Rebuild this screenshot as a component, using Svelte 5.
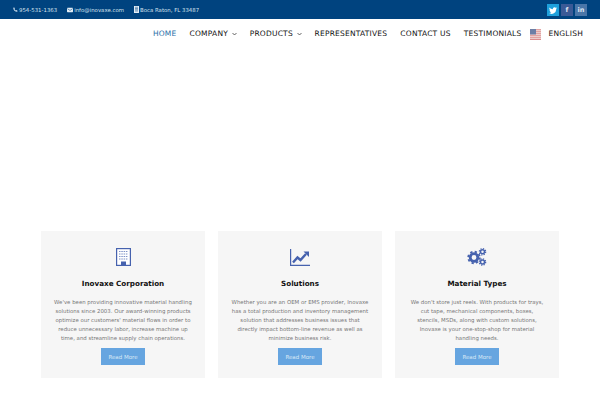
<script>
	const contacts = [
		{ icon: 'phone', text: '954-531-1363' },
		{ icon: 'mail', text: 'info@inovaxe.com' },
		{ icon: 'building', text: 'Boca Raton, FL 33487' }
	];

	const menu = [
		{ label: 'HOME', active: true },
		{ label: 'COMPANY', caret: true },
		{ label: 'PRODUCTS', caret: true },
		{ label: 'REPRESENTATIVES' },
		{ label: 'CONTACT US' },
		{ label: 'TESTIMONIALS' }
	];

	const cards = [
		{
			icon: 'office',
			title: 'Inovaxe Corporation',
			lines: [
				"We've been providing innovative material handling",
				'solutions since 2003. Our award-winning products',
				"optimize our customers' material flows in order to",
				'reduce unnecessary labor, increase machine up',
				'time, and streamline supply chain operations.'
			]
		},
		{
			icon: 'chart',
			title: 'Solutions',
			lines: [
				'Whether you are an OEM or EMS provider, Inovaxe',
				'has a total production and inventory management',
				'solution that addresses business issues that',
				'directly impact bottom-line revenue as well as',
				'minimize business risk.'
			]
		},
		{
			icon: 'gears',
			title: 'Material Types',
			lines: [
				"We don't store just reels. With products for trays,",
				'cut tape, mechanical components, boxes,',
				'stencils, MSDs, along with custom solutions,',
				'Inovaxe is your one-stop-shop for material',
				'handling needs.'
			]
		}
	];

	// teeth of a gear, as dashes round a circle
	function teeth(r) {
		const c = 2 * Math.PI * r;
		return `${c / 16} ${c / 16}`;
	}
</script>

<div class="topbar">
	<div class="contacts">
		{#each contacts as c}
			<span class="contact">
				{#if c.icon === 'phone'}
					<svg width="5" height="5" viewBox="0 0 12 12"><path d="M2.5 .8 4.6 3.6 3.4 5c.8 1.600 2 2.800 3.600 3.600L8.400 7.400 11.200 9.500 9.800 11.400C5 11.200 .8 7 .6 2.200z" fill="#cfe0ee"/></svg>
				{:else if c.icon === 'mail'}
					<svg width="6" height="6" viewBox="0 0 14 12"><rect y="1" width="14" height="10" rx="1.500" fill="#e3edf5"/><path d="M1 3l6 4 6-4" fill="none" stroke="#00437f" stroke-width="1.300"/></svg>
				{:else}
					<svg width="5" height="7" viewBox="0 0 10 14"><rect width="10" height="14" fill="#e3edf5"/><path d="M2 2.500h6M2 5h6M2 7.500h6M2 10h6" stroke="#00437f" stroke-width="1"/></svg>
				{/if}
				{c.text}
			</span>
		{/each}
	</div>
	<div class="social">
		<span class="tw">
			<svg width="8" height="7" viewBox="0 0 16 14"><path d="M16 2c-.6.3-1.200.4-1.900.5.700-.4 1.200-1 1.400-1.800-.6.400-1.300.6-2.100.8A3.300 3.300 0 0 0 7.800 4.400C5.100 4.300 2.700 3 1.100 1 .2 2.500.700 4.400 2.100 5.400c-.5 0-1-.2-1.500-.4 0 1.600 1.100 3 2.600 3.300-.5.100-1 .2-1.500.1.400 1.300 1.600 2.200 3.100 2.300A6.600 6.600 0 0 1 0 12.100 9.300 9.300 0 0 0 14.400 3.800c.6-.5 1.200-1.100 1.600-1.800z" fill="#fff"/></svg>
		</span>
		<span class="fb">f</span>
		<span class="li">in</span>
	</div>
</div>

<nav class="nav">
	{#each menu as item}
		<span class="item" class:active={item.active}>
			{item.label}
			{#if item.caret}
				<svg class="caret" width="5" height="4" viewBox="0 0 10 8"><path d="M1 2l4 4 4-4" fill="none" stroke="#333" stroke-width="1.500"/></svg>
			{/if}
		</span>
	{/each}
	<svg class="flag" width="11" height="11" viewBox="0 0 11 11">
		<rect width="11" height="11" fill="#f4e4e2"/>
		<path d="M0 .8h11M0 2.800h11M0 4.800h11M0 6.800h11M0 8.800h11M0 10.500h11" stroke="#dc8d8d" stroke-width="1.100"/>
		<rect width="6" height="5.500" fill="#6d7fa6"/>
	</svg>
	<span class="item lang">ENGLISH</span>
</nav>

<main class="cards">
	{#each cards as card}
		<section class="card">
			<div class="icon">
				{#if card.icon === 'office'}
					<svg width="15" height="18" viewBox="0 0 15 18">
						<rect x=".6" y=".6" width="13.800" height="16.800" fill="#fff" stroke="#4662ae" stroke-width="1.200"/>
						<path d="M3 3.500h9M3 6h9M3 8.500h9M3 11h9" stroke="#7f93c8" stroke-width="1.200" stroke-dasharray="1.500 .8"/>
						<rect x="5" y="13.500" width="5" height="4" fill="#4662ae"/>
					</svg>
				{:else if card.icon === 'chart'}
					<svg width="20" height="17" viewBox="0 0 20 17">
						<path d="M.6 0v16.300H20" fill="none" stroke="#4662ae" stroke-width="1.200"/>
						<path d="M3 13.500 7.500 8.500 10.500 11 16 5" fill="none" stroke="#4662ae" stroke-width="2.400"/>
						<path d="M13.500 2.500H19V8z" fill="#4662ae"/>
					</svg>
				{:else}
					<svg width="20" height="18" viewBox="0 0 20 18">
						<g fill="none" stroke="#4662ae">
							<circle cx="7" cy="9.500" r="3.800" stroke-width="2.800"/>
							<circle cx="7" cy="9.500" r="5.800" stroke-width="1.800" stroke-dasharray={teeth(5.800)}/>
							<circle cx="15.500" cy="3.800" r="2" stroke-width="1.500"/>
							<circle cx="15.500" cy="3.800" r="3.200" stroke-width="1.200" stroke-dasharray={teeth(3.200)}/>
							<circle cx="15.500" cy="14" r="2" stroke-width="1.500"/>
							<circle cx="15.500" cy="14" r="3.200" stroke-width="1.200" stroke-dasharray={teeth(3.200)}/>
						</g>
					</svg>
				{/if}
			</div>
			<h3>{card.title}</h3>
			<p>
				{#each card.lines as line}
					<span>{line}</span>
				{/each}
			</p>
			<button>Read More</button>
		</section>
	{/each}
</main>

<style>
	:global(body) {
		background: #fff;
		font-family: "DejaVu Sans", sans-serif;
	}

	.topbar {
		height: 19px;
		background: #00437f;
		display: flex;
		align-items: center;
		justify-content: space-between;
		padding: 0 13px;
		color: #d5e2ee;
		font-size: 5.400px;
		overflow: hidden;
	}

	.contacts {
		display: flex;
		gap: 10px;
	}

	.contact {
		display: flex;
		align-items: center;
		gap: 1px;
		white-space: nowrap;
	}

	.social {
		display: flex;
		gap: 2px;
		padding-top: 1px;
	}

	.social span {
		width: 12px;
		height: 12px;
		display: flex;
		align-items: center;
		justify-content: center;
		color: #dfe6f2;
		font-size: 6.500px;
		font-weight: bold;
	}

	.tw { background: #1ea0dc; }
	.fb { background: #3b5a96; }
	.li { background: #4a76a8; }

	.nav {
		height: 28px;
		display: flex;
		align-items: center;
		justify-content: flex-end;
		padding-right: 17px;
		font-size: 7.500px;
		letter-spacing: .22px;
		color: #111;
	}

	.item {
		margin-left: 13px;
		white-space: nowrap;
	}

	.active {
		color: #2a6fa8;
	}

	.caret {
		margin-left: 1px;
		vertical-align: 0;
	}

	.flag {
		margin: 2px 0 0 8px;
	}

	.lang {
		margin-left: 8px;
	}

	.cards {
		display: grid;
		grid-template-columns: repeat(3, 164px);
		gap: 13px;
		padding: 184px 41px 0;
	}

	.card {
		height: 147px;
		background: #f6f6f6;
		display: flex;
		flex-direction: column;
		align-items: center;
		padding-top: 17px;
		box-sizing: border-box;
	}

	.icon {
		height: 18px;
		display: flex;
		align-items: center;
	}

	h3 {
		margin: 12px 0 0;
		font-size: 7.200px;
		line-height: 12px;
		font-weight: bold;
		color: #111;
	}

	p {
		margin: 8px 0 0;
		font-size: 5.400px;
		line-height: 9px;
		color: #777;
		text-align: center;
	}

	p span {
		display: block;
		white-space: nowrap;
	}

	button {
		margin-top: 5px;
		width: 44px;
		height: 17px;
		padding: 0;
		border: 0;
		background: #66a5e0;
		color: #d9e8f6;
		font-family: inherit;
		font-size: 5.500px;
	}
</style>
